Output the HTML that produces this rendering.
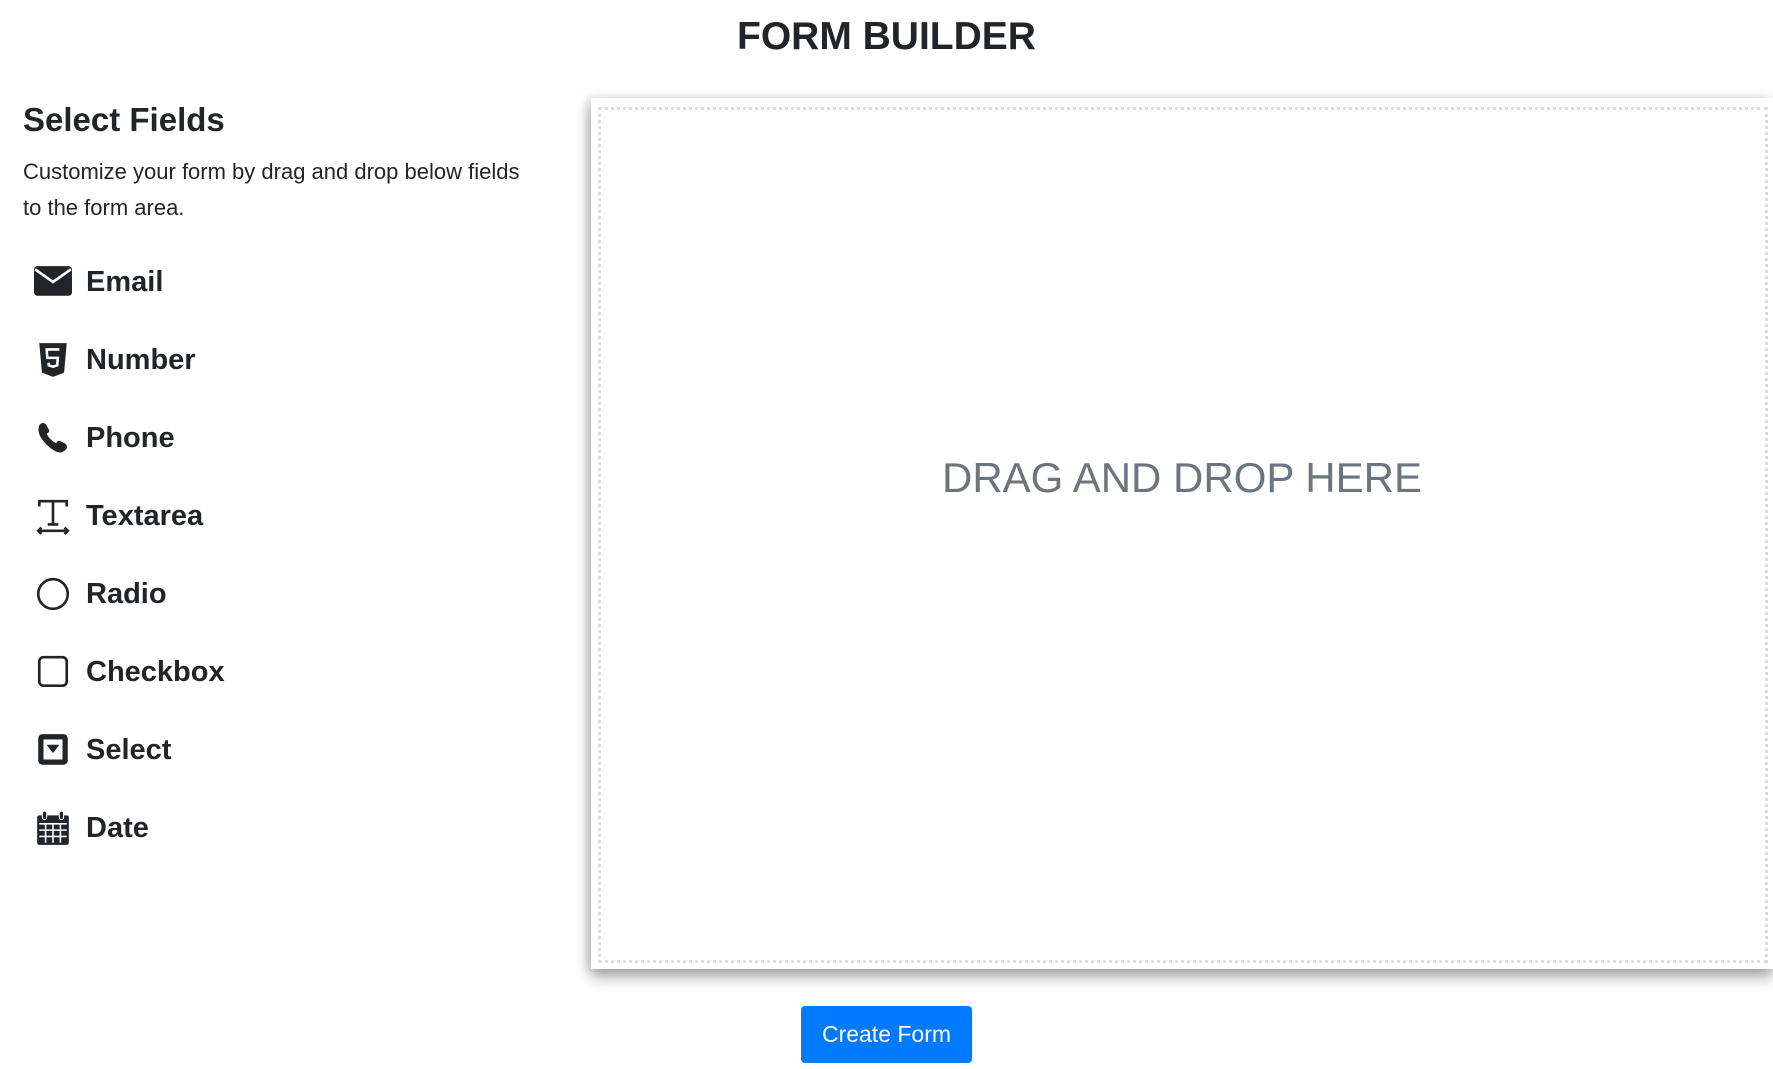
<!DOCTYPE html>
<html><head><meta charset="utf-8"><style>
body{margin:0;width:1773px;height:1069px;background:#fff;font-family:"Liberation Sans",sans-serif;color:#212529;position:relative;overflow:hidden}
.abs{position:absolute}
h1{position:absolute;left:0;width:1773px;text-align:center;top:13px;margin:0;font-size:39px;font-weight:bold;line-height:48px}
h2{position:absolute;left:23px;top:99px;margin:0;font-size:33px;font-weight:bold;line-height:42px}
.desc{left:23px;top:154px;font-size:22px;line-height:36px;width:530px}
.list{left:0;top:240px;width:560px;height:650px;overflow:hidden}
.item{position:absolute;left:34px;height:40px;display:flex;align-items:center}
.item svg{width:38px;height:38px;margin-right:14px}
.item span{font-size:29px;font-weight:bold}
.drop{left:591px;top:98px;width:1182px;height:871px;background:#fff;box-shadow:0 8px 14px rgba(0,0,0,.35),-4px 0 10px rgba(0,0,0,.12)}
.inner{position:absolute;left:7px;top:9px;right:5px;bottom:6px;border:3px dotted #ddd}
.dt{position:absolute;left:0;right:0;top:356px;text-align:center;font-size:42px;color:#6c757d}
.btn{left:801px;top:1006px;width:171px;height:57px;background:#007bff;border-radius:4px;color:#fff;font-size:23px;text-align:center;line-height:57px}
</style></head><body>
<h1>FORM BUILDER</h1>
<h2>Select Fields</h2>
<div class="abs desc">Customize your form by drag and drop below fields<br>to the form area.</div>
<div class="abs list">
<div class="item" style="top:22px"><svg viewBox="0 0 36 36"><rect x="0" y="3" width="36" height="28" rx="3" fill="#212529"/><path d="M1 6 L18 18 L35 6" stroke="#fff" stroke-width="2.5" fill="none"/></svg><span>Email</span></div>
<div class="item" style="top:100px"><svg viewBox="0 0 36 36"><path d="M5 2h26l-2.5 28L18 34 7.5 30z" fill="#212529"/><path d="M24 8H12l.6 8h10l-.6 7-4 1.3-4-1.3-.2-2.5" stroke="#fff" stroke-width="2.4" fill="none"/></svg><span>Number</span></div>
<div class="item" style="top:178px"><svg viewBox="0 0 36 36"><path d="M5 6c2-3 5-3 7 0l2 4c1 2 0 3-2 4 2 4 5 7 9 9 1-2 2-3 4-2l4 2c3 2 3 5 0 7-3 3-8 2-14-3S2 14 5 6z" fill="#212529"/></svg><span>Phone</span></div>
<div class="item" style="top:256px"><svg viewBox="0 0 36 36"><path d="M5 9V4h26v5M18 4v22M13 26h10M4 32h28M7 29l-3 3 3 3M29 29l3 3-3 3" stroke="#212529" stroke-width="2.5" fill="none"/></svg><span>Textarea</span></div>
<div class="item" style="top:334px"><svg viewBox="0 0 36 36"><circle cx="18" cy="18" r="14" stroke="#212529" stroke-width="2.5" fill="none"/></svg><span>Radio</span></div>
<div class="item" style="top:412px"><svg viewBox="0 0 36 36"><rect x="5" y="4" width="26" height="27" rx="4" stroke="#212529" stroke-width="2.5" fill="none"/></svg><span>Checkbox</span></div>
<div class="item" style="top:490px"><svg viewBox="0 0 36 36"><rect x="4" y="3" width="28" height="29" rx="4" fill="#212529"/><rect x="9" y="8" width="18" height="19" fill="#fff"/><path d="M12 13h12l-6 8z" fill="#212529"/></svg><span>Select</span></div>
<div class="item" style="top:568px"><svg viewBox="0 0 36 36"><rect x="3" y="6" width="30" height="28" rx="2" fill="#212529"/><path d="M5 14h26M5 20h26M5 26h26M11 14v18M18 14v18M25 14v18" stroke="#fff" stroke-width="1.5"/><rect x="8" y="2" width="4" height="8" rx="2" fill="#212529" stroke="#fff" stroke-width="1"/><rect x="24" y="2" width="4" height="8" rx="2" fill="#212529" stroke="#fff" stroke-width="1"/></svg><span>Date</span></div>
<div class="item" style="top:646px"><svg viewBox="0 0 36 36"><path d="M20 4l8 6" stroke="#212529" stroke-width="3"/></svg><span>File</span></div>
</div>
<div class="abs drop"><div class="inner"></div><div class="dt">DRAG AND DROP HERE</div></div>
<div class="abs btn">Create Form</div>
</body></html>
